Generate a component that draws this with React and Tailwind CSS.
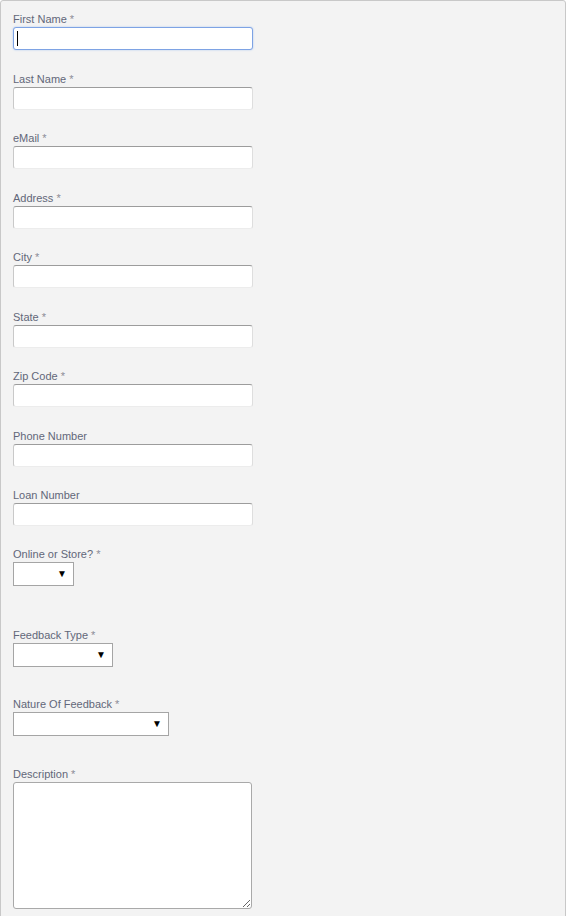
import React from "react";

const textFields = [
  { label: "First Name", required: true, focused: true },
  { label: "Last Name", required: true },
  { label: "eMail", required: true },
  { label: "Address", required: true },
  { label: "City", required: true },
  { label: "State", required: true },
  { label: "Zip Code", required: true },
  { label: "Phone Number" },
  { label: "Loan Number" },
];

function Label({ children, required, tight }) {
  return (
    <label
      className={
        tight
          ? "block h-[15px] text-[11px] leading-[15px] text-[#626779]"
          : "block h-[16px] text-[11px] leading-[16px] text-[#626779]"
      }
    >
      {children}
      {required && <span className="text-[#8c8c96]"> *</span>}
    </label>
  );
}

function TextField({ label, required, focused }) {
  return (
    <div className="mb-[20.5px]">
      <Label required={required}>{label}</Label>
      <div className="relative w-[240px]">
        <input
          type="text"
          className={
            focused
              ? "block h-[23px] w-[240px] rounded-[3px] border border-[#7ea3e4] bg-white shadow-[0_0_2px_#a9c4f0] outline-none"
              : "block h-[23px] w-[240px] rounded-[3px] border border-t-[#9c9c9c] border-l-[#c9c9c9] border-r-[#dedede] border-b-[#ececec] bg-white outline-none"
          }
        />
        {focused && <span className="absolute left-[4px] top-[4px] h-[15px] w-px bg-black" />}
      </div>
    </div>
  );
}

function Select({ width }) {
  return (
    <div
      className={`flex h-[24px] items-center justify-end border border-[#a5a5a5] bg-white pr-[6px] text-[10px] leading-none text-black ${width}`}
    >
      ▼
    </div>
  );
}

export default function App() {
  return (
    <div className="min-h-screen bg-white" style={{ fontFamily: '"Liberation Sans", Arial, sans-serif' }}>
      <div className="w-[566px] rounded-t-[3px] border border-[#c8c8c8] bg-[#f3f3f3] pl-[12px] pt-[10px] pb-[30px]">
        {textFields.map((f) => (
          <TextField key={f.label} {...f} />
        ))}

        <div className="mb-[42px]">
          <Label required tight>Online or Store?</Label>
          <Select width="w-[61px]" />
        </div>

        <div className="mb-[30px]">
          <Label required tight>Feedback Type</Label>
          <Select width="w-[100px]" />
        </div>

        <div className="mb-[31px]">
          <Label required tight>Nature Of Feedback</Label>
          <Select width="w-[156px]" />
        </div>

        <div>
          <Label required tight>Description</Label>
          <textarea className="block h-[127px] w-[239px] rounded-[3px] border border-[#a9a9a9] bg-white outline-none" />
        </div>
      </div>
    </div>
  );
}
